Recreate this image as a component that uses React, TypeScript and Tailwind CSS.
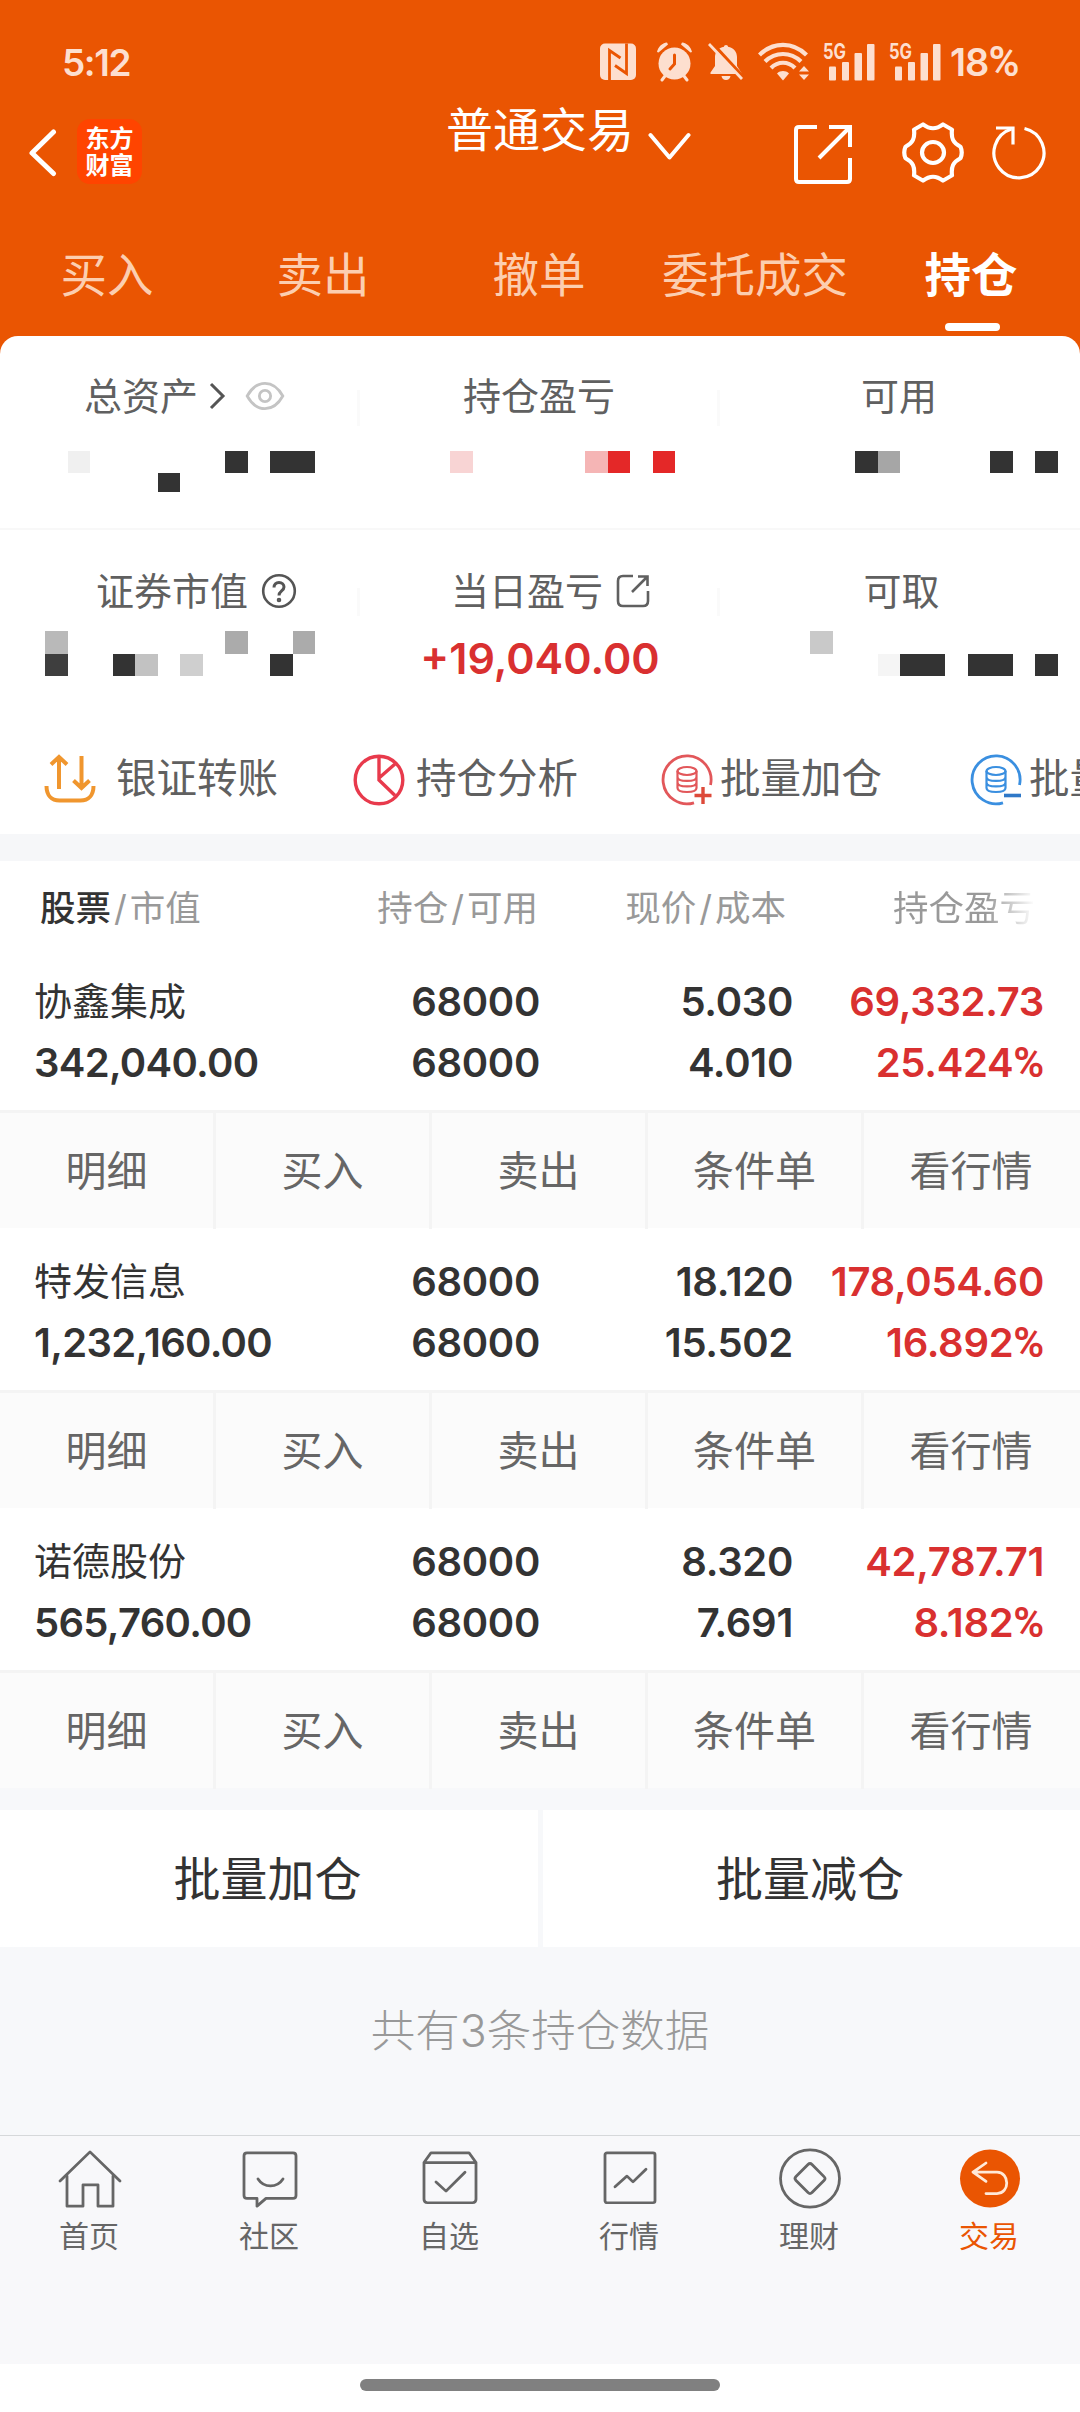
import React from 'react';

const tabs = ['买入', '卖出', '撤单', '委托成交', '持仓'];

const holdings = [
  { name: '协鑫集成', value: '342,040.00', held: '68000', usable: '68000', price: '5.030', cost: '4.010', profit: '69,332.73', rate: '25.424' },
  { name: '特发信息', value: '1,232,160.00', held: '68000', usable: '68000', price: '18.120', cost: '15.502', profit: '178,054.60', rate: '16.892' },
  { name: '诺德股份', value: '565,760.00', held: '68000', usable: '68000', price: '8.320', cost: '7.691', profit: '42,787.71', rate: '8.182' },
];

const rowActions = ['明细', '买入', '卖出', '条件单', '看行情'];

// masked amounts: [column, row, span, color] on a 22.5px grid
type Block = [number, number, number, string];

const maskTop: Block[] = [
  [4, 1, 1, '#f0f0f0'],
  [8, 2, 1, '#333333'],
  [11, 1, 1, '#333333'],
  [13, 1, 2, '#333333'],
  [21, 1, 1, '#f8d4d4'],
  [27, 1, 1, '#f5b5b5'],
  [28, 1, 1, '#e42828'],
  [30, 1, 1, '#e42828'],
  [39, 1, 1, '#333333'],
  [40, 1, 1, '#a6a6a6'],
  [45, 1, 1, '#333333'],
  [47, 1, 1, '#333333'],
];

const maskBottom: Block[] = [
  [3, 1, 1, '#b9b9b9'],
  [3, 2, 1, '#3e3e3e'],
  [6, 2, 1, '#333333'],
  [7, 2, 1, '#c2c2c2'],
  [9, 2, 1, '#cfcfcf'],
  [11, 1, 1, '#ababab'],
  [13, 2, 1, '#333333'],
  [14, 1, 1, '#ababab'],
  [37, 1, 1, '#c9c9c9'],
  [40, 2, 1, '#f5f5f5'],
  [41, 2, 2, '#333333'],
  [44, 2, 2, '#333333'],
  [47, 2, 1, '#333333'],
];

const Mask: React.FC<{ blocks: Block[]; className: string }> = ({ blocks, className }) => (
  <div className={`grid grid-cols-[repeat(48,22.5px)] ${className}`}>
    {blocks.map(([col, row, span, color]) => (
      <div
        key={`${col}-${row}`}
        style={{ gridColumn: `${col} / span ${span}`, gridRow: row, backgroundColor: color }}
      />
    ))}
  </div>
);

const Signal: React.FC = () => (
  <svg className="-ml-1 shrink-0" width="56" height="44" viewBox="-4 -2 56 44" fill="#fddfcf">
    <text x="-1" y="17" fontSize="21" fontWeight="700" textLength="23" lengthAdjust="spacingAndGlyphs" fontFamily="Inter">5G</text>
    <rect x="5" y="24.500" width="7" height="14" rx="1" />
    <rect x="18" y="20" width="7" height="18.500" rx="1" />
    <rect x="30.500" y="11" width="7.500" height="27.500" rx="1" />
    <rect x="43" y="2" width="7.500" height="36.500" rx="1" />
  </svg>
);

const StatusBar: React.FC = () => (
  <div className="flex h-[100px] items-center pt-[24px] text-[#fddfcf]">
    <span className="ml-[62px] w-[538px] text-[37px] font-semibold leading-none tracking-[-1.4px]">5:12</span>
    <svg className="shrink-0" width="36" height="40" viewBox="0 0 36 40">
      <rect x="0" y="1.500" width="36" height="36.500" rx="5" fill="#fddfcf" />
      <path d="M9.500 38V8.500L20.500 16M26.500 1.500V31.500L15 23.500" fill="none" stroke="#ea5502" strokeWidth="2.800" />
    </svg>
    <svg className="ml-[20px] shrink-0" width="37" height="40" viewBox="0 0 37 40">
      <circle cx="18.500" cy="21.500" r="16" fill="#fddfcf" />
      <path d="M9 34l-3 4M28 34l3 4" stroke="#fddfcf" strokeWidth="3" strokeLinecap="round" />
      <path d="M1 10C2 5 6 1 11 0.500l1 2L2.500 10.500zM36 10C35 5 31 1 26 0.500l-1 2 9.500 8z" fill="#fddfcf" />
      <path d="M18.500 13v9l-4.500 5" fill="none" stroke="#ea5502" strokeWidth="3" strokeLinecap="round" />
    </svg>
    <svg className="ml-[15px] shrink-0" width="36" height="40" viewBox="0 0 36 40">
      <path d="M18 3c1.200 0 2 .8 2 1.700 5.500 1 9 5 9 10.300v9l4.500 7V32H2.500v-1.500L7 24v-9c0-5.300 3.500-9.300 9-10.300C16 3.800 16.800 3 18 3z" fill="#fddfcf" />
      <path d="M13.500 34h9c-.5 2.500-2 4-4.500 4s-4-1.500-4.500-4z" fill="#fddfcf" />
      <path d="M3.500 0.500L37 37" stroke="#ea5502" strokeWidth="3.500" />
      <path d="M1 2l33 35" stroke="#fddfcf" strokeWidth="2.800" />
    </svg>
    <svg className="ml-[14px] shrink-0" width="52" height="40" viewBox="0 0 52 40">
      <g fill="none" stroke="#fddfcf" strokeWidth="4.200">
        <path d="M1.500 13C15-.5 35-.5 48.500 13" />
        <path d="M7 19.500C17.500 9.500 32.500 9.500 43 19.500" />
        <path d="M13 26C20 19 30 19 37 26" />
      </g>
      <path d="M19 31.500c3.500-3.200 8.500-3.200 12 0L25 38.500z" fill="#fddfcf" />
      <path d="M41 29.500h10L46 24zM41 32.500h10L46 38z" fill="#fddfcf" />
    </svg>
    <div className="ml-[14px] flex shrink-0 gap-[14px]">
      <Signal />
      <Signal />
    </div>
    <span className="ml-[8px] whitespace-nowrap text-[38px] font-semibold leading-none tracking-[-1px]">
      18<span className="font-['Roboto'] text-[42px]">%</span>
    </span>
  </div>
);

const TitleBar: React.FC = () => (
  <div className="flex h-[108px] items-center text-white">
    <svg className="mb-[3px] ml-[28px] shrink-0" width="29" height="50" viewBox="0 0 29 50" fill="none" stroke="currentColor" strokeWidth="5" strokeLinecap="round" strokeLinejoin="round">
      <path d="M25.500 4L4 25l21.500 20.500" />
    </svg>
    <div className="mb-[5px] ml-[20px] flex h-[65px] w-[65px] shrink-0 flex-col items-center justify-center rounded-[13px] bg-[#ff4400] text-[24px] font-bold leading-[27px]">
      <span>东方</span>
      <span>财富</span>
    </div>
    <div className="ml-[304px] flex w-[246px] shrink-0 pb-[41px]">
      <span className="text-[47px] leading-none">普通交易</span>
      <svg className="ml-[14px] mt-[26px] shrink-0" width="43" height="30" viewBox="0 0 43 30" fill="none" stroke="currentColor" strokeWidth="4" strokeLinecap="round" strokeLinejoin="round">
        <path d="M2.500 3l19 22.500L40.500 3" />
      </svg>
    </div>
    <svg className="ml-[102px] shrink-0" width="58" height="60" viewBox="0 0 58 60" fill="none" stroke="currentColor" strokeWidth="4">
      <path d="M23 3H5Q2 3 2 6v49q0 3 3 3h48q3 0 3-3V34" />
      <path d="M35 3h21v20M56 3L25 34" />
    </svg>
    <svg className="mb-[3px] ml-[50px] shrink-0" width="62" height="61" viewBox="0 0 62 64" preserveAspectRatio="none" fill="none" stroke="currentColor" strokeWidth="4.200" strokeLinejoin="round">
      <path d="M21 2.500L12 8C13 17 11 22 3.500 26Q1 32 3.500 38C11 42 13 47 12 56l9 5.500C28 56 34 56 41 61.500l9-5.500C49 47 51 42 58.500 38Q61 32 58.500 26C51 22 49 17 50 8L41 2.500C34 8 28 8 21 2.500z" />
      <circle cx="31" cy="32" r="11" />
    </svg>
    <svg className="mb-[3px] ml-[28px] shrink-0" width="56" height="57" viewBox="0 0 56 57" fill="none" stroke="currentColor" strokeWidth="3.200">
      <path d="M32.500 4.500A25 25 0 1 1 19.500 5" />
      <path d="M4 4h17v16.500" />
    </svg>
  </div>
);

const Tabs: React.FC = () => (
  <div className="grid h-[128px] grid-cols-5 pt-[19px]">
    {tabs.map((tab) => {
      const active = tab === '持仓';
      return (
        <div key={tab} className="flex flex-col items-center">
          <span
            className={`-ml-[2px] text-[46.5px] leading-[96px] ${active ? 'font-bold text-white' : 'text-[#fcceb0]'}`}
          >
            {tab}
          </span>
          {active && <div className="h-[8px] w-[55px] rounded-full bg-white" />}
        </div>
      );
    })}
  </div>
);

const Summary: React.FC = () => (
  <div className="h-[376px] rounded-t-[18px] bg-white text-[38px] leading-none text-[#606060]">
    <div className="h-[194px] border-b-2 border-[#f8f8f8] pt-[30px]">
      <div className="grid h-[60px] grid-cols-3">
        <div className="flex items-center pl-[84px]">
          <span>总资产</span>
          <svg className="ml-[10px]" width="18" height="28" viewBox="0 0 18 28" fill="none" stroke="#555555" strokeWidth="3">
            <path d="M3 2l12 12L3 26" />
          </svg>
          <svg className="ml-[18px]" width="42" height="30" viewBox="0 0 42 32" fill="none" stroke="#c4c4c4" strokeWidth="3">
            <path d="M2 16C12-2 30-2 40 16 30 34 12 34 2 16z" />
            <circle cx="21" cy="16" r="6" />
          </svg>
          <div className="ml-auto h-[36px] w-[3px] self-end bg-[#fafafa]" />
        </div>
        <div className="flex items-center pl-[103px]">
          <span>持仓盈亏</span>
          <div className="ml-auto h-[36px] w-[3px] self-end bg-[#fafafa]" />
        </div>
        <div className="flex items-center justify-center pr-[2px]">可用</div>
      </div>
      <Mask blocks={maskTop} className="mt-[25px] grid-rows-[22px_19px]" />
    </div>
    <div className="pt-[31px]">
      <div className="grid h-[60px] grid-cols-3">
        <div className="flex items-center pl-[96px]">
          <span>证券市值</span>
          <svg className="ml-[13px]" width="36" height="36" viewBox="0 0 36 36" fill="none" stroke="#555555" strokeWidth="2.600">
            <circle cx="18" cy="18" r="15.800" />
            <path d="M13 14.500c0-3 2-5 5-5s5 2 5 4.500c0 4-5 4-5 8.500" strokeWidth="3" />
            <circle cx="18" cy="27" r="1" />
          </svg>
          <div className="mb-[5px] ml-auto h-[28px] w-[3px] self-end bg-[#fafafa]" />
        </div>
        <div className="flex items-center pl-[91px]">
          <span>当日盈亏</span>
          <svg className="ml-[13px]" width="34" height="34" viewBox="0 0 34 34" fill="none" stroke="#606060" strokeWidth="2.600">
            <path d="M17 2H7Q2 2 2 7v20q0 5 5 5h20q5 0 5-5V17" />
            <path d="M22 2.500h9.500V12M31.500 2.500L16 18" />
          </svg>
          <div className="mb-[5px] ml-auto h-[28px] w-[3px] self-end bg-[#fafafa]" />
        </div>
        <div className="flex items-center justify-center pl-[3px]">可取</div>
      </div>
      <div className="grid pt-[10px]">
        <Mask blocks={maskBottom} className="col-start-1 row-start-1 grid-rows-[23px_22px]" />
        <span className="col-start-1 row-start-1 text-center text-[43px] font-semibold leading-[55px] text-[#d93030]">
          +19,040.00
        </span>
      </div>
    </div>
  </div>
);

const Coins: React.FC<{ color: string; children: React.ReactNode }> = ({ color, children }) => (
  <svg className="shrink-0" width="52" height="52" viewBox="0 0 52 52" fill="none" stroke={color} strokeWidth="2.800">
    <path d="M49.500 31A24 24 0 1 0 33 48.800" />
    <g strokeWidth="2.200">
      <ellipse cx="26" cy="17" rx="9.500" ry="4" />
      <path d="M16.500 17v17c0 5.300 19 5.300 19 0V17M16.500 23c0 5.300 19 5.300 19 0M16.500 28.500c0 5.300 19 5.300 19 0" />
    </g>
    {children}
  </svg>
);

const Shortcuts: React.FC = () => (
  <div className="flex h-[122px] items-center overflow-hidden whitespace-nowrap bg-white pt-[13px] text-[40.5px] leading-none text-[#606060]">
    <div className="ml-[44px] flex w-[309px] shrink-0 items-center gap-[20px]">
      <svg width="52" height="52" viewBox="0 0 52 52" fill="none" stroke="#f0962e" strokeWidth="4">
        <path d="M2.500 32c0 9 5 14.500 13 14.500h21c8 0 13-5.500 13-14.500" />
        <path d="M15 35V3M7 10.500L15 3l8 7.500M37.500 2v32M29.500 26.500l8 7.500 8-7.500" />
      </svg>
      <span>银证转账</span>
    </div>
    <div className="flex w-[308px] shrink-0 items-center gap-[11px]">
      <svg width="52" height="52" viewBox="0 0 52 52" fill="none" stroke="#e83a4c" strokeWidth="3.400">
        <circle cx="26" cy="26" r="23.800" />
        <path d="M26 2v24l16 15.500M26 24l16-14" />
      </svg>
      <span>持仓分析</span>
    </div>
    <div className="flex w-[309px] shrink-0 items-center gap-[7px]">
      <Coins color="#e2575a">
        <path d="M42 33v17M33.500 41.500h17" stroke="#dd4a3a" strokeWidth="3.400" />
      </Coins>
      <span>批量加仓</span>
    </div>
    <div className="flex shrink-0 items-center gap-[7px]">
      <Coins color="#3a8fe0">
        <path d="M34 41.500h17" stroke="#2f78c8" strokeWidth="3.600" />
      </Coins>
      <span>批量减仓</span>
    </div>
  </div>
);

const HoldingsTable: React.FC = () => (
  <div className="bg-white">
    <div className="grid h-[88px] grid-cols-[312px_228px_248px_247px] pt-[2px] text-[35.5px] leading-[91px] text-[#999999]">
      <div className="flex pl-[40px]">
        <span className="font-medium text-[#333333]">股票</span>
        <span className="px-[3px]">/</span>
        <span>市值</span>
      </div>
      <div className="flex justify-end pr-[2px]">
        <span>持仓</span>
        <span className="px-[3px]">/</span>
        <span>可用</span>
      </div>
      <div className="flex justify-end pr-[2px]">
        <span>现价</span>
        <span className="px-[3px]">/</span>
        <span>成本</span>
      </div>
      <div className="bg-linear-to-r from-[#999999] from-80% to-white bg-clip-text text-right text-transparent">持仓盈亏</div>
    </div>

    {holdings.map((h, i) => (
      <div key={h.name}>
        <div
          className={`grid grid-cols-[312px_228px_253px_251px] text-right text-[40px] font-semibold leading-[61px] text-[#333333] ${i === 0 ? 'h-[161px] pt-[22px]' : 'h-[162px] pt-[23px]'}`}
        >
          <div className="flex flex-col pl-[34px] text-left">
            <span className="text-[38px] font-normal">{h.name}</span>
            <span className="tracking-[-0.7px]">{h.value}</span>
          </div>
          <div className="flex flex-col tracking-[-0.3px]">
            <span>{h.held}</span>
            <span>{h.usable}</span>
          </div>
          <div className="flex flex-col tracking-[-0.3px]">
            <span>{h.price}</span>
            <span>{h.cost}</span>
          </div>
          <div className="flex flex-col tracking-[-0.3px] text-[#d93030]">
            <span>{h.profit}</span>
            <span>
              {h.rate}
              <span className="font-['Roboto'] text-[42px]">%</span>
            </span>
          </div>
        </div>
        <div className="grid h-[118px] grid-cols-5 border-t-[3px] border-[#f4f4f4] bg-[#fbfbfb] text-center text-[41px] leading-[116px] text-[#666666]">
          {rowActions.map((a) => (
            <div key={a} className="border-r-[3px] border-[#f4f4f4] last:border-r-0 last:pr-[2px]">
              {a}
            </div>
          ))}
        </div>
      </div>
    ))}
  </div>
);

const navItems = [
  {
    label: '首页',
    icon: (
      <>
        <path d="M1 34L31 4l30 30" />
        <path d="M8 29v31h16V38h15v22h15V29" />
      </>
    ),
  },
  {
    label: '社区',
    icon: (
      <>
        <path d="M8 5h46q3 0 3 3v41q0 3-3 3H27l-9 8v-8H8q-3 0-3-3V8q0-3 3-3z" />
        <path d="M19 32c6 9.500 19 9.500 25 0" />
      </>
    ),
  },
  {
    label: '自选',
    icon: (
      <>
        <path d="M5 15l7-10h38l7 10v38q0 3.500-3.500 3.500h-45Q5 56.500 5 53zM5 15h52" />
        <path d="M17 35l10 9.500L46 25" />
      </>
    ),
  },
  {
    label: '行情',
    icon: (
      <>
        <rect x="6" y="5" width="50" height="51.500" rx="2" />
        <path d="M16 40l12-11 6 6 13-13" />
      </>
    ),
  },
  {
    label: '理财',
    icon: (
      <>
        <circle cx="31" cy="31.500" r="29.500" />
        <path d="M33 17l12 12.500q2 2 0 4L33 46q-2 2-4 0L17 33.500q-2-2 0-4L29 17q2-2 4 0z" />
      </>
    ),
  },
  {
    label: '交易',
    icon: (
      <>
        <circle cx="31" cy="31.500" r="30" fill="#ea5502" stroke="none" />
        <path d="M14 25h24c13 0 13 22 0 22H27M27 15.500L14 25l13 9.500" stroke="#ffe9d8" />
      </>
    ),
  },
];

const BottomNav: React.FC = () => (
  <div className="grid h-[229px] grid-cols-6 border-t border-[#d6d8da] bg-[#f8f8fa]">
    {navItems.map((item) => (
      <div
        key={item.label}
        className={`flex flex-col items-center pt-[12px] ${item.label === '交易' ? 'text-[#ea5502]' : 'text-[#666666]'}`}
      >
        <svg width="64" height="62" viewBox="-1 0 64 64" preserveAspectRatio="none" fill="none" stroke="currentColor" strokeWidth="2.800" strokeLinecap="round" strokeLinejoin="round">
          {item.icon}
        </svg>
        <span className="mr-[2px] mt-[9px] text-[30px] leading-[34px]">{item.label}</span>
      </div>
    ))}
  </div>
);

const App: React.FC = () => {
  return (
    <div className="w-[1080px] overflow-hidden bg-white font-['Inter','Noto_Sans_CJK_SC',sans-serif]">
      <div className="bg-[#ea5502]">
        <StatusBar />
        <TitleBar />
        <Tabs />
        <Summary />
      </div>
      <Shortcuts />
      <div className="h-[27px] bg-[#f6f7f9]" />
      <HoldingsTable />

      {/* Batch buttons */}
      <div className="grid grid-cols-[538px_537px] gap-[5px] bg-[#f7f8fa] pt-[22px] text-center text-[47px] leading-[138px] text-[#333333]">
        <div className="h-[137px] bg-white pr-[3px]">批量加仓</div>
        <div className="h-[137px] bg-white pr-[3px]">批量减仓</div>
      </div>
      <div className="h-[188px] bg-[#f7f8fa] text-center text-[44.5px] font-light leading-[169px] text-[#999999]">
        共有3条持仓数据
      </div>

      <BottomNav />
      <div className="flex h-[48px] justify-center pt-[15px]">
        <div className="h-[12px] w-[360px] rounded-full bg-[#808080]" />
      </div>
    </div>
  );
};

export default App;
